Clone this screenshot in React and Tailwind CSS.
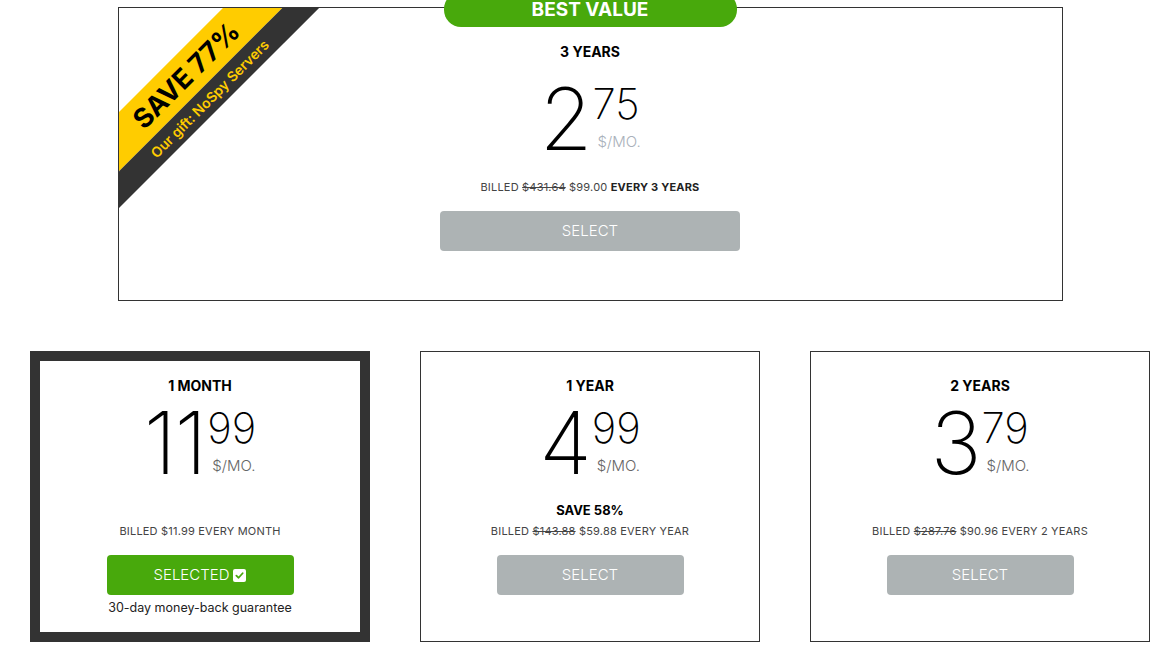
import React from 'react';

const font = { fontFamily: 'Inter, "Open Sans", Arial, sans-serif' };

function Price({ whole, cents, dim }) {
  return (
    <div className="flex justify-center items-start">
      <span className="text-[86px] font-[150] leading-[62px] h-[62px] text-black tracking-[-2px]">{whole}</span>
      <div className="flex flex-col ml-[2px] h-[62px]">
        <span className="text-[42px] font-extralight leading-[32px] text-black">{cents}</span>
        <span className={"mt-auto ml-[5px] text-[15px] font-light leading-[16px] " + (dim ? "text-[#a9b1ba]" : "text-[#666]")}>$/MO.</span>
      </div>
    </div>
  );
}

function CheckBox() {
  return (
    <span className="inline-flex w-[13px] h-[13px] bg-white rounded-[2px] items-center justify-center ml-[4px]">
      <svg width="9" height="9" viewBox="0 0 10 10"><path d="M1.5 5.2 L4 7.5 L8.5 2.5" stroke="#48a90c" strokeWidth="2" fill="none" strokeLinecap="round" strokeLinejoin="round" /></svg>
    </span>
  );
}

function Card({ title, whole, cents, save, billed, selected }) {
  return (
    <div className={"w-[340px] h-[291px] flex flex-col items-center " + (selected ? "border-[10px] border-[#333] pt-[15px]" : "border border-[#333] pt-[24px]")}>
      <div className="text-[14px] font-bold leading-[20px] text-black">{title}</div>
      <div className="mt-[16px] h-[64px]">
        <Price whole={whole} cents={cents} />
      </div>
      <div className="h-[63px] flex flex-col justify-end items-center">
        {save && <div className="text-[13px] font-bold leading-[16px] text-black mb-[5px]">{save}</div>}
        <div className="text-[11px] leading-[16px] text-[#444] tracking-[0.2px]">{billed}</div>
      </div>
      <button className={"mt-[16px] w-[187px] h-[40px] rounded-[4px] text-white text-[15px] font-light flex items-center justify-center " + (selected ? "bg-[#48a90c]" : "bg-[#adb3b4]")}>
        {selected ? <>SELECTED<CheckBox /></> : "SELECT"}
      </button>
      {selected && <div className="mt-[5px] text-[12.5px] leading-[16px] text-[#222]">30-day money-back guarantee</div>}
    </div>
  );
}

export default function App() {
  return (
    <div className="min-h-screen bg-white pt-[7px]" style={font}>
      <div className="w-[1120px] ml-[30px]">
        <div className="relative w-[945px] h-[294px] mx-auto border border-[#333] flex flex-col items-center pt-[34px]">
          <div className="absolute top-[-16px] left-[325px] w-[293px] h-[35px] rounded-[17px] bg-[#48a90c] flex items-center justify-center">
            <span className="text-white font-bold text-[19px] leading-none">BEST VALUE</span>
          </div>
          <div className="absolute top-0 left-0 w-[210px] h-[210px] overflow-hidden">
            <div className="absolute left-[-74px] top-[42px] w-[300px] h-[68px] -rotate-45 flex flex-col">
              <div className="h-[42px] bg-[#ffcc00] flex items-center justify-center">
                <span className="text-black font-bold text-[27px] leading-none">SAVE 77%</span>
              </div>
              <div className="h-[26px] bg-[#333] flex items-center justify-center">
                <span className="text-[#ffcc00] font-semibold text-[14px] leading-none">Our gift: NoSpy Servers</span>
              </div>
            </div>
          </div>
          <div className="text-[14px] font-bold leading-[20px] text-black">3 YEARS</div>
          <div className="mt-[26px]">
            <Price whole="2" cents="75" dim />
          </div>
          <div className="mt-[29px] text-[11px] leading-[16px] text-[#444] tracking-[0.2px]">
            BILLED <span className="line-through">$431.64</span> $99.00 <span className="font-bold text-[#222]">EVERY 3 YEARS</span>
          </div>
          <button className="mt-[16px] w-[300px] h-[40px] rounded-[4px] bg-[#adb3b4] text-white text-[15px] font-light">SELECT</button>
        </div>
        <div className="mt-[50px] flex gap-[50px]">
          <Card title="1 MONTH" whole="11" cents="99" billed="BILLED $11.99 EVERY MONTH" selected />
          <Card title="1 YEAR" whole="4" cents="99" save="SAVE 58%" billed={<>BILLED <span className="line-through">$143.88</span> $59.88 EVERY YEAR</>} />
          <Card title="2 YEARS" whole="3" cents="79" billed={<>BILLED <span className="line-through">$287.76</span> $90.96 EVERY 2 YEARS</>} />
        </div>
      </div>
    </div>
  );
}
